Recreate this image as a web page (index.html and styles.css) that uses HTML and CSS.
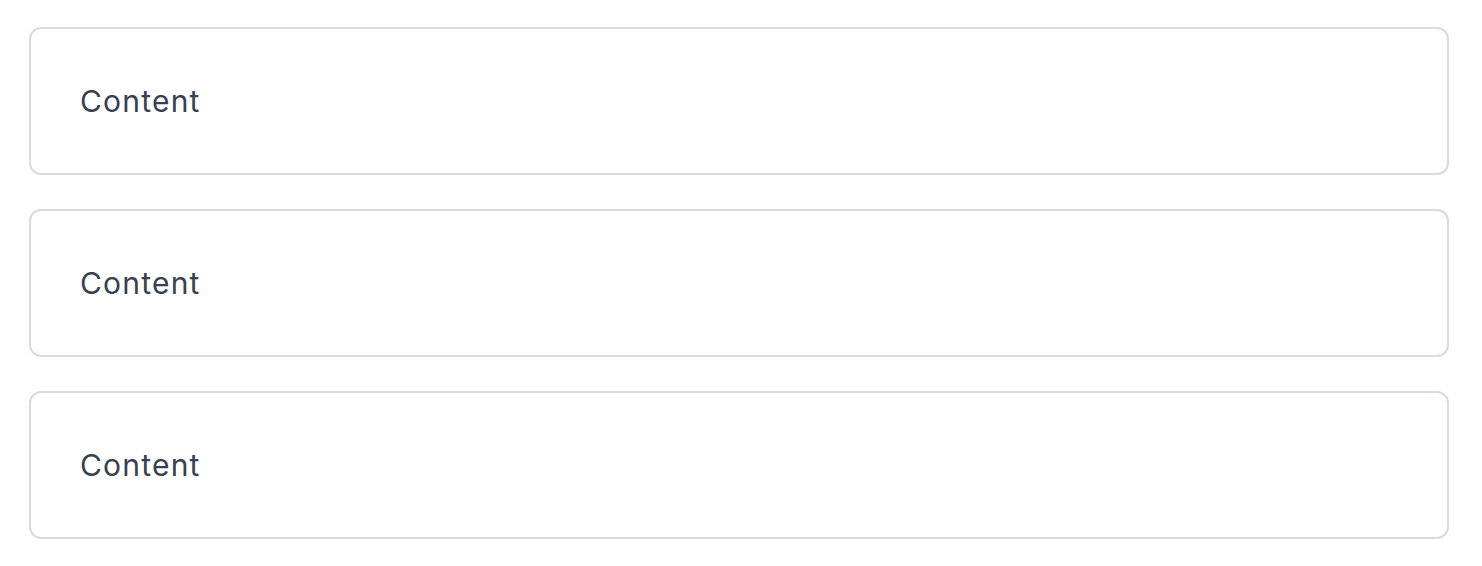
FILE: index.html
```html
<!DOCTYPE html>
<html>
<head>
<meta charset="utf-8">
<link rel="stylesheet" href="styles.css">
</head>
<body>
<div class="list">
  <div class="card">Content</div>
  <div class="card">Content</div>
  <div class="card">Content</div>
</div>
</body>
</html>
```
FILE: styles.css
```css
html, body {
  margin: 0;
  padding: 0;
  background: #ffffff;
}
body {
  font-family: "Inter", "Liberation Sans", sans-serif;
}
.list {
  display: flex;
  flex-direction: column;
  gap: 34px;
  padding: 27px 33px 0 29px;
}
.card {
  box-sizing: border-box;
  height: 148px;
  border: 2px solid #d7dade;
  border-radius: 12px;
  display: flex;
  align-items: center;
  padding-left: 49px;
  font-size: 30px;
  letter-spacing: 1.2px;
  color: #374151;
}
```
